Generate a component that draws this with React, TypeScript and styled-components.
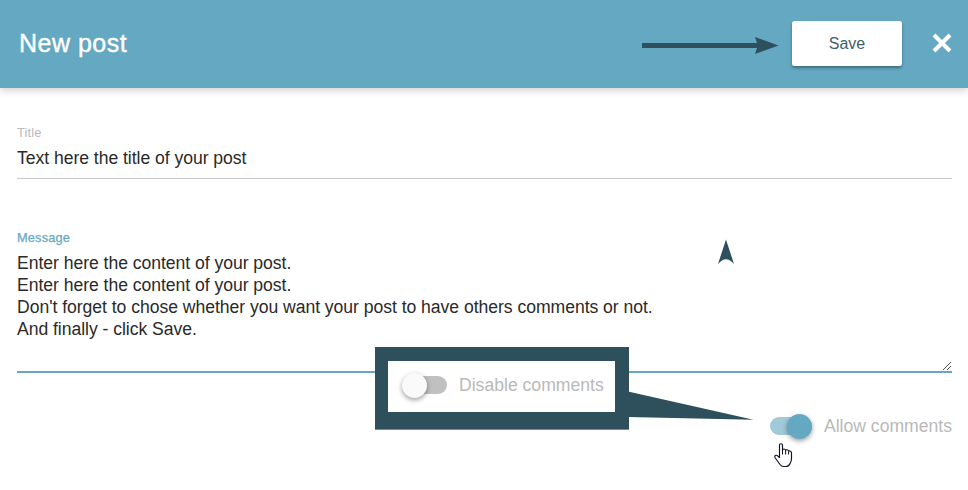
import React from "react";
import styled, { createGlobalStyle, css } from "styled-components";

const color = {
  brand: "#65a8c2",
  dark: "#2d505c",
  text: "#2a2a2a",
  muted: "#b9b9b9",
};

const GlobalStyle = createGlobalStyle`
  * { box-sizing: border-box; }
  body {
    margin: 0;
    background: #fff;
    font-family: "Liberation Sans", Arial, sans-serif;
    overflow: hidden;
  }
`;

const Page = styled.div`
  position: relative;
  height: 490px;
  display: flex;
  flex-direction: column;
`;

const Header = styled.header`
  flex: none;
  height: 88px;
  padding: 0 16px 1px 19px;
  display: flex;
  align-items: center;
  background: ${color.brand};
  box-shadow: 0 2px 8px rgba(0, 0, 0, 0.2);
`;

const Heading = styled.h1`
  flex: 1;
  margin: 0;
  padding-bottom: 1px;
  font-size: 25px;
  line-height: 30px;
  font-weight: 400;
  letter-spacing: 0.5px;
  color: #fff;
  -webkit-text-stroke: 0.4px #fff;
`;

const SaveButton = styled.button`
  width: 110px;
  height: 45px;
  margin-right: 30px;
  padding: 1px 0 0;
  border: 0;
  border-radius: 2.5px;
  background: #fff;
  color: #41606b;
  font: 16px/20px "Liberation Sans", Arial, sans-serif;
  box-shadow: 0 2px 3px rgba(20, 50, 62, 0.5);
`;

const CloseButton = styled.button`
  width: 20px;
  height: 20px;
  margin-bottom: 1px;
  padding: 0;
  border: 0;
  background: none;
  display: flex;
`;

const Form = styled.main`
  padding: 37px 16px 0 17px;
  display: flex;
  flex-direction: column;
`;

const Field = styled.div<{ $active?: boolean }>`
  position: relative;
  display: flex;
  flex-direction: column;
  height: ${(p) => (p.$active ? 143 : 54)}px;
  margin-bottom: ${(p) => (p.$active ? 40 : 51)}px;
  border-bottom: ${(p) => (p.$active ? `2px solid ${color.brand}` : "1px solid #c8c8c8")};
`;

const Label = styled.label<{ $active?: boolean }>`
  font-size: 12.8px;
  line-height: 16px;
  letter-spacing: 0.15px;
  color: ${(p) => (p.$active ? color.brand : color.muted)};
  ${(p) => p.$active && css`-webkit-text-stroke: 0.25px ${color.brand};`}
`;

const Value = styled.div`
  margin-top: 6px;
  font-size: 17.6px;
  line-height: 22px;
  letter-spacing: -0.042px;
  white-space: pre-line;
  color: ${color.text};
`;

const ResizeGrip = styled.svg`
  position: absolute;
  right: 1px;
  bottom: 0;
`;

const ToggleRow = styled.div<{ $end?: boolean }>`
  display: flex;
  align-items: center;
  height: 26px;
  gap: 12px;
  justify-content: ${(p) => (p.$end ? "flex-end" : "flex-start")};
`;

const Track = styled.div<{ $on?: boolean }>`
  flex: none;
  width: 42px;
  height: 18px;
  border-radius: 9px;
  display: flex;
  align-items: center;
  justify-content: ${(p) => (p.$on ? "flex-end" : "flex-start")};
  background: ${(p) => (p.$on ? "#a1cad9" : "#c0c0c0")};
`;

const Knob = styled.div<{ $on?: boolean }>`
  flex: none;
  width: 25px;
  height: 25px;
  margin-left: ${(p) => (p.$on ? 0 : -3)}px;
  border-radius: 50%;
  background: ${(p) => (p.$on ? color.brand : "#fafafa")};
  box-shadow: 0 2px 5px rgba(0, 0, 0, 0.38);
`;

const ToggleText = styled.span`
  font-size: 17.6px;
  line-height: 22px;
  white-space: nowrap;
  color: ${color.muted};
`;

const Annotations = styled.svg`
  position: absolute;
  inset: 0;
  pointer-events: none;
`;

const Callout = styled.aside`
  position: absolute;
  left: 375px;
  top: 347px;
  width: 254px;
  height: 82px;
  padding: 11px 0 0 17px;
  border: solid ${color.dark};
  border-width: 14px 14px 17px 13px;
  background: #fff;
  box-shadow: 0 1px 0 #858585;
  display: flex;
  flex-direction: column;
`;

const Cursor = styled.svg`
  position: absolute;
  left: 774px;
  top: 443px;
`;

function Toggle({ on, label }: { on?: boolean; label: string }) {
  return (
    <ToggleRow $end={on}>
      <Track $on={on}>
        <Knob $on={on} />
      </Track>
      <ToggleText>{label}</ToggleText>
    </ToggleRow>
  );
}

const message = `Enter here the content of your post.
Enter here the content of your post.
Don't forget to chose whether you want your post to have others comments or not.
And finally - click Save.`;

export default function App() {
  return (
    <Page>
      <GlobalStyle />
      <Header>
        <Heading>New post</Heading>
        <SaveButton>Save</SaveButton>
        <CloseButton aria-label="Close">
          <svg width="20" height="20" viewBox="0 0 20 20">
            <path d="M2 2 18 18M18 2 2 18" stroke="#fff" strokeWidth="4" />
          </svg>
        </CloseButton>
      </Header>
      <Form>
        <Field>
          <Label>Title</Label>
          <Value>Text here the title of your post</Value>
        </Field>
        <Field $active>
          <Label $active>Message</Label>
          <Value>{message}</Value>
          <ResizeGrip width="9" height="9" viewBox="0 0 9 9" shapeRendering="crispEdges">
            <path d="M0.5 8.5 8.5 0.5M4.5 8.5 8.5 4.5" stroke="#555" />
          </ResizeGrip>
        </Field>
        <Toggle on label="Allow comments" />
      </Form>
      <Annotations width="968" height="490" viewBox="0 0 968 490" fill={color.dark}>
        <path d="M642 43H757L755 37 778.5 45.5 755 54 757 48H642Z" />
        <path d="M726 239.5 734 264Q726 254.5 718 264Z" />
        <path d="M628 391.5 753.5 419.8 628 417Z" />
      </Annotations>
      <Callout>
        <Toggle label="Disable comments" />
      </Callout>
      <Cursor width="19" height="25" viewBox="0 0 19 25">
        <path
          d="M5.5 14.5V2.3Q5.5.7 7 .7T8.5 2.3V7.5Q8.7 6 10 6T11.7 7.3Q12 6.7 13 6.8T14.7 8.2Q15.2 7.7 16.2 8T17.5 9.8V15.5Q17.5 18 16.3 20 15 23.5 11.5 23.5H9.5Q7.5 23.5 6 21.5L1.3 15Q.2 13.2 1.4 12.5T4 13.2Z"
          fill="#fff"
          stroke="#111122"
          strokeWidth="1.15"
          strokeLinejoin="round"
        />
        <path d="M8.5 7V11.5M11.6 7.5V11.5M14.6 8.5V11.5" stroke="#111122" strokeWidth="1" />
      </Cursor>
    </Page>
  );
}
